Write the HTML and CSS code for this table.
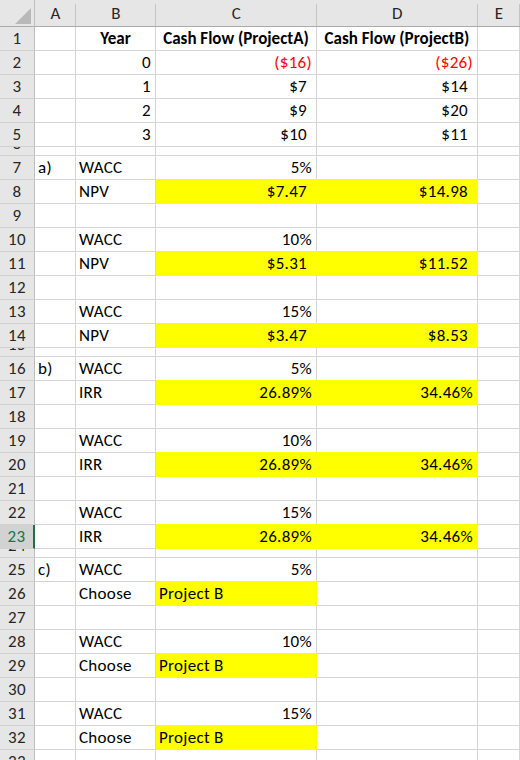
FILE: index.html
```html
<!DOCTYPE html>
<html>
<head>
<meta charset="utf-8">
<link rel="stylesheet" href="styles.css">
</head>
<body>
<div class="sheet">
  <div class="hrow">
    <div class="corner"><span class="tri"></span></div>
    <div class="ch">A</div>
    <div class="ch">B</div>
    <div class="ch">C</div>
    <div class="ch">D</div>
    <div class="ch">E</div>
  </div>

  <div class="row"><div class="rh">1</div><div class="c"></div><div class="c b ctr">Year</div><div class="c b ctr">Cash Flow (ProjectA)</div><div class="c b ctr">Cash Flow (ProjectB)</div><div class="c"></div></div>
  <div class="row"><div class="rh">2</div><div class="c"></div><div class="c r">0</div><div class="c r neg">($16)</div><div class="c r neg">($26)</div><div class="c"></div></div>
  <div class="row"><div class="rh">3</div><div class="c"></div><div class="c r">1</div><div class="c r cur">$7</div><div class="c r cur">$14</div><div class="c"></div></div>
  <div class="row"><div class="rh">4</div><div class="c"></div><div class="c r">2</div><div class="c r cur">$9</div><div class="c r cur">$20</div><div class="c"></div></div>
  <div class="row"><div class="rh">5</div><div class="c"></div><div class="c r">3</div><div class="c r cur">$10</div><div class="c r cur">$11</div><div class="c"></div></div>
  <div class="row sm"><div class="rh">6</div><div class="c"></div><div class="c"></div><div class="c"></div><div class="c"></div><div class="c"></div></div>

  <div class="row"><div class="rh">7</div><div class="c">a)</div><div class="c">WACC</div><div class="c r">5%</div><div class="c"></div><div class="c"></div></div>
  <div class="row"><div class="rh">8</div><div class="c"></div><div class="c">NPV</div><div class="c r cur y">$7.47</div><div class="c r cur y">$14.98</div><div class="c"></div></div>
  <div class="row"><div class="rh">9</div><div class="c"></div><div class="c"></div><div class="c"></div><div class="c"></div><div class="c"></div></div>
  <div class="row"><div class="rh">10</div><div class="c"></div><div class="c">WACC</div><div class="c r">10%</div><div class="c"></div><div class="c"></div></div>
  <div class="row"><div class="rh">11</div><div class="c"></div><div class="c">NPV</div><div class="c r cur y">$5.31</div><div class="c r cur y">$11.52</div><div class="c"></div></div>
  <div class="row"><div class="rh">12</div><div class="c"></div><div class="c"></div><div class="c"></div><div class="c"></div><div class="c"></div></div>
  <div class="row"><div class="rh">13</div><div class="c"></div><div class="c">WACC</div><div class="c r">15%</div><div class="c"></div><div class="c"></div></div>
  <div class="row"><div class="rh">14</div><div class="c"></div><div class="c">NPV</div><div class="c r cur y">$3.47</div><div class="c r cur y">$8.53</div><div class="c"></div></div>
  <div class="row sm"><div class="rh">15</div><div class="c"></div><div class="c"></div><div class="c"></div><div class="c"></div><div class="c"></div></div>

  <div class="row"><div class="rh">16</div><div class="c">b)</div><div class="c">WACC</div><div class="c r">5%</div><div class="c"></div><div class="c"></div></div>
  <div class="row"><div class="rh">17</div><div class="c"></div><div class="c">IRR</div><div class="c r y">26.89%</div><div class="c r y">34.46%</div><div class="c"></div></div>
  <div class="row"><div class="rh">18</div><div class="c"></div><div class="c"></div><div class="c"></div><div class="c"></div><div class="c"></div></div>
  <div class="row"><div class="rh">19</div><div class="c"></div><div class="c">WACC</div><div class="c r">10%</div><div class="c"></div><div class="c"></div></div>
  <div class="row"><div class="rh">20</div><div class="c"></div><div class="c">IRR</div><div class="c r y">26.89%</div><div class="c r y">34.46%</div><div class="c"></div></div>
  <div class="row"><div class="rh">21</div><div class="c"></div><div class="c"></div><div class="c"></div><div class="c"></div><div class="c"></div></div>
  <div class="row"><div class="rh">22</div><div class="c"></div><div class="c">WACC</div><div class="c r">15%</div><div class="c"></div><div class="c"></div></div>
  <div class="row"><div class="rh sel">23</div><div class="c"></div><div class="c">IRR</div><div class="c r y">26.89%</div><div class="c r y">34.46%</div><div class="c"></div></div>
  <div class="row sm"><div class="rh">24</div><div class="c"></div><div class="c"></div><div class="c"></div><div class="c"></div><div class="c"></div></div>

  <div class="row"><div class="rh">25</div><div class="c">c)</div><div class="c">WACC</div><div class="c r">5%</div><div class="c"></div><div class="c"></div></div>
  <div class="row"><div class="rh">26</div><div class="c"></div><div class="c">Choose</div><div class="c y">Project B</div><div class="c"></div><div class="c"></div></div>
  <div class="row"><div class="rh">27</div><div class="c"></div><div class="c"></div><div class="c"></div><div class="c"></div><div class="c"></div></div>
  <div class="row"><div class="rh">28</div><div class="c"></div><div class="c">WACC</div><div class="c r">10%</div><div class="c"></div><div class="c"></div></div>
  <div class="row"><div class="rh">29</div><div class="c"></div><div class="c">Choose</div><div class="c y">Project B</div><div class="c"></div><div class="c"></div></div>
  <div class="row"><div class="rh">30</div><div class="c"></div><div class="c"></div><div class="c"></div><div class="c"></div><div class="c"></div></div>
  <div class="row"><div class="rh">31</div><div class="c"></div><div class="c">WACC</div><div class="c r">15%</div><div class="c"></div><div class="c"></div></div>
  <div class="row"><div class="rh">32</div><div class="c"></div><div class="c">Choose</div><div class="c y">Project B</div><div class="c"></div><div class="c"></div></div>
  <div class="row"><div class="rh">33</div><div class="c"></div><div class="c"></div><div class="c"></div><div class="c"></div><div class="c"></div></div>
</div>
</body>
</html>
```
FILE: styles.css
```css
html, body {
  margin: 0;
  padding: 0;
  background: #ffffff;
  overflow: hidden;
}
.sheet {
  width: 520px;
  height: 760px;
  overflow: hidden;
  font-family: Carlito, Calibri, Lato, "Noto Sans", sans-serif;
  font-size: 17px;
  letter-spacing: 0.3px;
  color: #000;
}
.hrow, .row {
  display: grid;
  grid-template-columns: 35px 41px 80px 161px 161px 42px;
}
.hrow { height: 27px; }
.row { height: 24px; }
.row.sm { height: 9px; }

.corner {
  box-sizing: border-box;
  background: #e6e6e6;
  border-right: 1px solid #bdbdbd;
  border-bottom: 1px solid #ababab;
  display: flex;
  justify-content: flex-end;
  align-items: flex-end;
  padding: 0 3px 2px 0;
}
.tri {
  width: 16px;
  height: 16px;
  background: #b9b9b9;
  clip-path: polygon(100% 0, 100% 100%, 0 100%);
}
.ch {
  box-sizing: border-box;
  background: linear-gradient(#c4c4c4, #c4c4c4) right 4px / 1px calc(100% - 4px) no-repeat, #e6e6e6;
  border-bottom: 1px solid #ababab;
  display: flex;
  justify-content: center;
  align-items: flex-end;
  padding-bottom: 2px;
  line-height: 20px;
  color: #262626;
}
.rh {
  box-sizing: border-box;
  background: #e6e6e6;
  border-right: 1px solid #bdbdbd;
  border-bottom: 1px solid #d0d0d0;
  display: flex;
  justify-content: center;
  align-items: flex-end;
  padding-bottom: 1px;
  line-height: 20px;
  color: #262626;
  overflow: hidden;
}
.sm .rh { font-size: 17px; }
.rh.sel {
  background: #d2d2d2;
  color: #217346;
  border-right: 2px solid #217346;
}
.c {
  box-sizing: border-box;
  border-right: 1px solid #d4d4d4;
  border-bottom: 1px solid #d4d4d4;
  display: flex;
  align-items: flex-end;
  padding: 0 3px 1px 3px;
  line-height: 20px;
  white-space: nowrap;
  overflow: hidden;
}
.sm .c { padding: 0; }
.b { font-weight: bold; letter-spacing: 0; }
.ctr { justify-content: center; padding-left: 0; padding-right: 0; }
.r { justify-content: flex-end; padding-right: 4px; }
.cur { padding-right: 9px; }
.neg { color: #ff0000; }
.y {
  background: #ffff00;
  border-bottom-color: #ffff00;
  border-right-color: #ffff00;
  box-shadow: 0 -1px 0 #ffff00;
}
```
